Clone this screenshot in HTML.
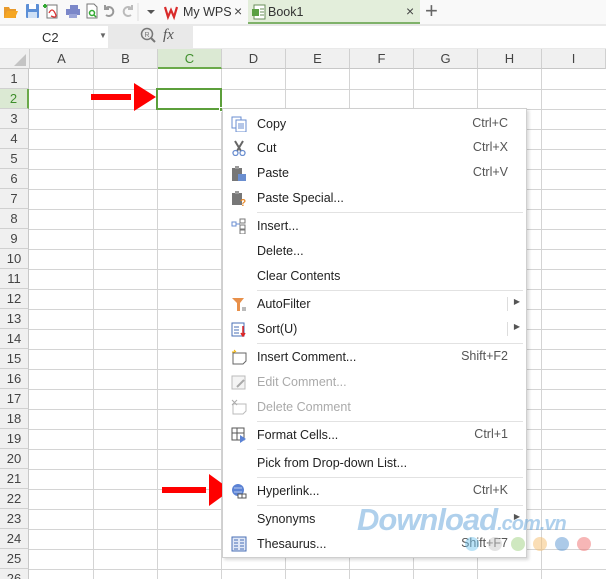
<!DOCTYPE html>
<html><head><meta charset="utf-8"><style>
*{margin:0;padding:0;box-sizing:border-box}
html,body{width:606px;height:579px;overflow:hidden}
body{background:#fff;font-family:"Liberation Sans",sans-serif;position:relative}
.abs{position:absolute}
.top{left:0;top:0;width:606px;height:24px;background:#f9f9f9}
.fbar{left:0;top:24px;width:606px;height:25px;background:#e9e9e9}
.colh{top:49px;height:20px;background:#f0f0f0;border-right:1px solid #d0d0d0;border-bottom:1px solid #c8c8c8;font-size:13px;color:#444;text-align:center;line-height:20px}
.rowh{left:0;width:29px;height:20px;background:#f0f0f0;border-bottom:1px solid #d0d0d0;border-right:1px solid #c8c8c8;font-size:13px;color:#444;text-align:center;line-height:20px}
.menu{left:222px;top:108px;width:305px;height:450px;background:#fff;border:1px solid #cfcfcf;box-shadow:2px 2px 3px rgba(0,0,0,.15)}
.it{position:absolute;left:34px;font-size:12.5px;color:#222;height:16px;line-height:16px}
.sc{position:absolute;right:18px;font-size:12.5px;color:#555}
.dis{color:#aaa}
.sep{position:absolute;left:34px;right:3px;height:1px;background:#e2e2e2}
.ic{position:absolute;left:8px;width:16px;height:16px}
</style></head><body>
<div class="abs top"></div>
<svg class="abs" style="left:0;top:0" width="606" height="24">
<path d="M4 7h5l1 2h6v9H4z" fill="#e89a2c"/><path d="M4 18l3-7h11l-3 7z" fill="#f5a623"/>
<rect x="26" y="4" width="13" height="14" rx="1" fill="#5c8fd6"/><rect x="29" y="4" width="7" height="5" fill="#fff"/><rect x="28" y="12" width="9" height="6" fill="#cfe0f5"/>
<rect x="47" y="5" width="10" height="13" fill="#fff" stroke="#777"/><path d="M49 13q3-6 6 0t-4 3" stroke="#d33" fill="none" stroke-width="1.3"/><path d="M43 6h4M45 4v4" stroke="#3a3" stroke-width="2"/>
<rect x="70" y="5" width="8" height="4" fill="#7b87c9"/><rect x="66" y="9" width="14" height="6" fill="#7b87c9"/><rect x="69" y="14" width="8" height="4" fill="#9aa4d8"/>
<path d="M87 4h7l3 3v11H87z" fill="#fff" stroke="#777"/><circle cx="92" cy="13" r="2.5" fill="none" stroke="#3a3" stroke-width="1.5"/><path d="M94 15l2 2" stroke="#3a3" stroke-width="1.5"/>
<path d="M106 15a4.5 4.5 0 1 0 0-7M105 5v4h4" stroke="#999" stroke-width="2" fill="none"/>
<path d="M131 15a4.5 4.5 0 1 1 0-7M132 5v4h-4" stroke="#bbb" stroke-width="2" fill="none"/>
<line x1="138" y1="3" x2="138" y2="21" stroke="#ddd"/>
<path d="M147 10h8l-4 4z" fill="#555"/>
<path d="M165 7l3 10 3-7 3 7 3-10" stroke="#d92b2b" stroke-width="2.2" fill="none"/>
</svg>
<div class="abs" style="left:248px;top:0;width:172px;height:24px;background:#e3eedb;border-bottom:2px solid #7fb26a"></div>
<div class="abs" style="left:183px;top:5px;font-size:12.5px;color:#333">My WPS</div>
<div class="abs" style="left:234px;top:3px;font-size:14px;color:#444">×</div>
<svg class="abs" style="left:251px;top:4px" width="16" height="16"><rect x="3" y="1" width="11" height="14" fill="#fff" stroke="#6a8f5a"/><rect x="1" y="5" width="7" height="7" fill="#5aa043"/><path d="M9 5h4M9 8h4M9 11h4" stroke="#6a8f5a"/></svg>
<div class="abs" style="left:268px;top:5px;font-size:12.5px;color:#333">Book1</div>
<div class="abs" style="left:406px;top:3px;font-size:14px;color:#444">×</div>
<div class="abs" style="left:425px;top:-2px;font-size:22px;color:#666">+</div>
<div class="abs fbar"></div>
<div class="abs" style="left:0;top:26px;width:108px;height:22px;background:#fff"></div>
<div class="abs" style="left:42px;top:30px;font-size:13px;color:#333">C2</div>
<div class="abs" style="left:99px;top:31px;font-size:8px;color:#666">▼</div>
<svg class="abs" style="left:140px;top:27px" width="20" height="20"><circle cx="7" cy="7" r="5.5" fill="none" stroke="#777" stroke-width="1.5"/><path d="M11 11l4 4" stroke="#777" stroke-width="2"/><text x="4.5" y="10" font-size="7" fill="#777" font-family="Liberation Sans">R</text></svg>
<div class="abs" style="left:163px;top:27px;font-size:15px;font-style:italic;color:#555;font-family:'Liberation Serif',serif">fx</div>
<div class="abs" style="left:193px;top:26px;width:413px;height:22px;background:#fff"></div>
<svg class="abs" style="left:0;top:0" width="606" height="579">
<g stroke="#d4d4d4" stroke-width="1">
<path d="M93.5 69V579M157.5 69V579M221.5 69V579M285.5 69V579M349.5 69V579M413.5 69V579M477.5 69V579M541.5 69V579"/>
<path d="M29 89.5H606M29 109.5H606M29 129.5H606M29 149.5H606M29 169.5H606M29 189.5H606M29 209.5H606M29 229.5H606M29 249.5H606M29 269.5H606M29 289.5H606M29 309.5H606M29 329.5H606M29 349.5H606M29 369.5H606M29 389.5H606M29 409.5H606M29 429.5H606M29 449.5H606M29 469.5H606M29 489.5H606M29 509.5H606M29 529.5H606M29 549.5H606M29 569.5H606"/>
</g></svg>
<div class="abs colh" style="left:0;width:30px"><svg width="12" height="12" style="position:absolute;left:14px;top:5px"><path d="M12 0V12H0z" fill="#c4c4c4"/></svg></div>
<div class="abs colh" style="left:30px;width:64px">A</div>
<div class="abs colh" style="left:94px;width:64px">B</div>
<div class="abs colh" style="left:158px;width:64px;background:#dbe9d3;color:#3f8f2c;border-bottom:2px solid #6aaa49">C</div>
<div class="abs colh" style="left:222px;width:64px">D</div>
<div class="abs colh" style="left:286px;width:64px">E</div>
<div class="abs colh" style="left:350px;width:64px">F</div>
<div class="abs colh" style="left:414px;width:64px">G</div>
<div class="abs colh" style="left:478px;width:64px">H</div>
<div class="abs colh" style="left:542px;width:64px">I</div>
<div id="rows"></div>
<script>
var h='';for(var i=1;i<=26;i++){var t=69+(i-1)*20;var st=i==2?'background:#dbe9d3;color:#3f8f2c;border-right:2px solid #6aaa49':'';h+='<div class="abs rowh" style="top:'+t+'px;'+st+'">'+i+'</div>';}
document.getElementById('rows').innerHTML=h;
</script>
<div class="abs" style="left:156px;top:88px;width:66px;height:22px;border:2px solid #5c9f3b"></div>
<div class="abs" style="left:219px;top:107px;width:5px;height:5px;background:#5c9f3b;border:1px solid #fff"></div>
<svg class="abs" style="left:90px;top:82px" width="68" height="30"><rect x="1" y="12" width="40" height="6" fill="#f00"/><path d="M44 1L66 15 44 29z" fill="#f00"/></svg>
<svg class="abs" style="left:160px;top:472px" width="72" height="36"><rect x="2" y="15" width="44" height="6" fill="#f00"/><path d="M49 2L71 18 49 34z" fill="#f00"/></svg>
<div class="abs menu">
<svg class="ic" style="top:7px"><rect x="1" y="1" width="9" height="11" fill="#fff" stroke="#6a8ed0"/><rect x="5" y="4" width="10" height="12" fill="#fff" stroke="#6a8ed0"/><path d="M7 8h6M7 10h6M7 12h6" stroke="#6a8ed0"/></svg>
<div class="it" style="top:7px">Copy</div><div class="sc" style="top:7px">Ctrl+C</div>
<svg class="ic" style="top:31px"><path d="M4 1l6 10M12 1L6 11" stroke="#666" stroke-width="2"/><circle cx="4.5" cy="13" r="2.5" fill="none" stroke="#6a8ed0" stroke-width="1.3"/><circle cx="11.5" cy="13" r="2.5" fill="none" stroke="#6a8ed0" stroke-width="1.3"/></svg>
<div class="it" style="top:31px">Cut</div><div class="sc" style="top:31px">Ctrl+X</div>
<svg class="ic" style="top:56px"><rect x="1" y="3" width="10" height="13" fill="#777"/><rect x="4" y="1" width="4" height="3" fill="#999"/><rect x="7" y="9" width="8" height="7" fill="#6a8ed0"/></svg>
<div class="it" style="top:56px">Paste</div><div class="sc" style="top:56px">Ctrl+V</div>
<svg class="ic" style="top:81px"><rect x="1" y="3" width="10" height="12" fill="#777"/><rect x="4" y="1" width="4" height="3" fill="#999"/><text x="9" y="16" font-size="10" font-weight="bold" fill="#e88a2a" font-family="Liberation Sans">?</text></svg>
<div class="it" style="top:81px">Paste Special...</div>
<div class="sep" style="top:103px"></div>
<svg class="ic" style="top:109px"><rect x="1" y="4" width="4" height="4" fill="none" stroke="#6a8ed0"/><rect x="9" y="1" width="5" height="4" fill="none" stroke="#777"/><rect x="9" y="7" width="5" height="4" fill="none" stroke="#777"/><rect x="9" y="12" width="5" height="4" fill="none" stroke="#777"/><path d="M5 6h4" stroke="#6a8ed0"/></svg>
<div class="it" style="top:109px">Insert...</div>
<div class="it" style="top:134px">Delete...</div>
<div class="it" style="top:159px">Clear Contents</div>
<div class="sep" style="top:181px"></div>
<svg class="ic" style="top:187px"><path d="M1 2h12L9 7v8H6V7z" fill="#e8904a"/><path d="M11 12h4M11 14h4" stroke="#777"/></svg>
<div class="it" style="top:187px">AutoFilter</div><div class="abs" style="left:284px;top:188px;width:1px;height:14px;background:#ddd"></div><div class="sc" style="top:188px;font-size:8px;right:6px">▶</div>
<svg class="ic" style="top:212px"><rect x="1" y="2" width="12" height="13" fill="#fff" stroke="#4a6fb5"/><path d="M3 6h5M3 9h5M3 12h5" stroke="#4a6fb5"/><path d="M12 5v10M10 12l2 3 2-3" stroke="#d22" stroke-width="1.5" fill="none"/></svg>
<div class="it" style="top:212px">Sort(U)</div><div class="abs" style="left:284px;top:213px;width:1px;height:14px;background:#ddd"></div><div class="sc" style="top:213px;font-size:8px;right:6px">▶</div>
<div class="sep" style="top:234px"></div>
<svg class="ic" style="top:240px"><path d="M2 4h13v8l-3 3H2z" fill="#fff" stroke="#666"/><path d="M3 1l2 2M1 3h3" stroke="#f5b400"/></svg>
<div class="it" style="top:240px">Insert Comment...</div><div class="sc" style="top:240px">Shift+F2</div>
<svg class="ic" style="top:265px"><rect x="1" y="2" width="13" height="13" fill="#f4f4f4" stroke="#bbb"/><path d="M6 13l7-7" stroke="#aaa" stroke-width="2"/></svg>
<div class="it dis" style="top:265px">Edit Comment...</div>
<svg class="ic" style="top:290px"><path d="M2 5h13v7l-3 3H2z" fill="#fff" stroke="#bbb"/><path d="M1 1l5 5M6 1L1 6" stroke="#aaa"/></svg>
<div class="it dis" style="top:290px">Delete Comment</div>
<div class="sep" style="top:312px"></div>
<svg class="ic" style="top:318px"><rect x="1" y="1" width="12" height="12" fill="#fff" stroke="#555"/><path d="M1 6h12M6 1v12" stroke="#555"/><path d="M9 8l6 4-6 4z" fill="#5b82d4"/></svg>
<div class="it" style="top:318px">Format Cells...</div><div class="sc" style="top:318px">Ctrl+1</div>
<div class="sep" style="top:340px"></div>
<div class="it" style="top:346px">Pick from Drop-down List...</div>
<div class="sep" style="top:368px"></div>
<svg class="ic" style="top:374px"><circle cx="7" cy="7" r="6" fill="#5b82d4"/><path d="M3 5h8M3 9h8" stroke="#b8ccf0"/><rect x="7" y="11" width="4" height="4" fill="#fff" stroke="#555"/><rect x="11" y="11" width="4" height="4" fill="#fff" stroke="#555"/></svg>
<div class="it" style="top:374px">Hyperlink...</div><div class="sc" style="top:374px">Ctrl+K</div>
<div class="sep" style="top:396px"></div>
<div class="it" style="top:402px">Synonyms</div><div class="sc" style="top:403px;font-size:8px;right:6px">▶</div>
<svg class="ic" style="top:427px"><rect x="1" y="1" width="14" height="14" fill="#dfe7f6" stroke="#4a6fb5"/><path d="M3 4h4M3 7h4M3 10h4M3 13h4M9 4h4M9 7h4M9 10h4M9 13h4" stroke="#4a6fb5"/></svg>
<div class="it" style="top:427px">Thesaurus...</div><div class="sc" style="top:427px">Shift+F7</div>
</div>
<div class="abs" style="left:357px;top:502px;font-size:31px;font-weight:bold;font-style:italic;color:rgba(110,170,220,.55);letter-spacing:-1px">Download<span style="font-size:20px">.com.vn</span></div>
<div class="abs" style="left:465px;top:537px;width:14px;height:14px;border-radius:50%;background:rgba(120,200,240,.5)"></div>
<div class="abs" style="left:488px;top:537px;width:14px;height:14px;border-radius:50%;background:rgba(200,200,200,.5)"></div>
<div class="abs" style="left:511px;top:537px;width:14px;height:14px;border-radius:50%;background:rgba(160,210,130,.5)"></div>
<div class="abs" style="left:533px;top:537px;width:14px;height:14px;border-radius:50%;background:rgba(245,190,110,.5)"></div>
<div class="abs" style="left:555px;top:537px;width:14px;height:14px;border-radius:50%;background:rgba(90,150,210,.5)"></div>
<div class="abs" style="left:577px;top:537px;width:14px;height:14px;border-radius:50%;background:rgba(240,110,110,.5)"></div>
</body></html>
